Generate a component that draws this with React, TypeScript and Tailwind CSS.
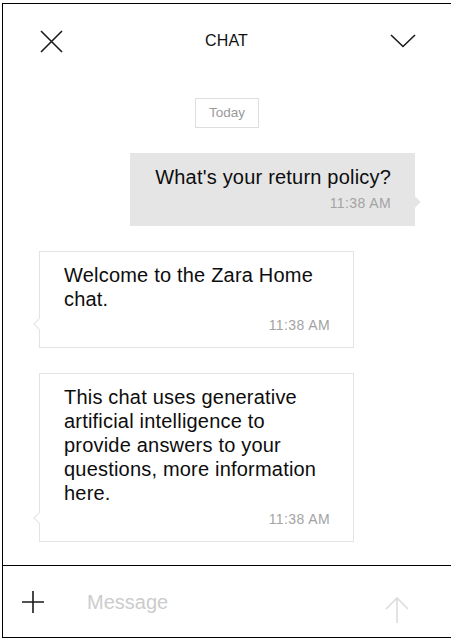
import type { ReactNode } from 'react'

function XIcon() {
  return (
    <svg width="23" height="23" viewBox="0 0 23 23" fill="none" stroke="#1a1a1a" strokeWidth="1.6">
      <path d="M1 1 L22 22 M22 1 L1 22" />
    </svg>
  )
}

function ChevronIcon() {
  return (
    <svg width="26" height="14" viewBox="0 0 26 14" fill="none" stroke="#1a1a1a" strokeWidth="1.6">
      <path d="M1 1 L13 12.5 L25 1" />
    </svg>
  )
}

function PlusIcon() {
  return (
    <svg width="22" height="22" viewBox="0 0 22 22" fill="none" stroke="#1a1a1a" strokeWidth="1.6">
      <path d="M11 0 V22 M0 11 H22" />
    </svg>
  )
}

function ArrowUpIcon() {
  return (
    <svg width="24" height="26" viewBox="0 0 24 26" fill="none" stroke="#dcdcdc" strokeWidth="1.6">
      <path d="M12 1 V26 M1 12 L12 1 L23 12" />
    </svg>
  )
}

function Time({ children }: { children: ReactNode }) {
  return (
    <div className="mt-[6px] text-right text-[14px] leading-4 tracking-[0.4px] text-[#a3a3a3]">{children}</div>
  )
}

function UserBubble({ text, time }: { text: string; time: string }) {
  return (
    <div className="flex justify-end">
      <div className="relative max-w-[315px] bg-[#e5e5e5] pl-[25px] pr-[24px] pt-3 pb-[15px]">
        <div className="text-[20px] leading-6 tracking-[0.2px] text-[#0d0d0d]">{text}</div>
        <Time>{time}</Time>
        <span className="absolute right-[-4px] bottom-[20px] h-[8px] w-[8px] rotate-45 bg-[#e5e5e5]" />
      </div>
    </div>
  )
}

function BotBubble({ text, time }: { text: string; time: string }) {
  return (
    <div className="flex justify-start">
      <div className="relative w-[315px] border border-[#e3e3e3] bg-white pl-[24px] pr-[23px] pt-[11px] pb-[14px]">
        <div className="text-[20px] leading-6 tracking-[0.2px] text-[#0d0d0d]">{text}</div>
        <Time>{time}</Time>
        <span className="absolute left-[-5px] bottom-[19px] h-[8px] w-[8px] rotate-45 border-b border-l border-[#e3e3e3] bg-white" />
      </div>
    </div>
  )
}

export default function App() {
  return (
    <div className="h-[641px] w-[451px] overflow-hidden bg-white font-['Liberation_Sans',Arial,sans-serif]">
      <div className="ml-[2px] mt-[3px] flex h-[635px] w-[449px] flex-col border-t border-l border-b border-black">
        <header className="flex h-[74px] shrink-0 items-center justify-between pl-[37px] pr-[35px]">
          <XIcon />
          <span className="text-[16px] tracking-[0.2px] text-[#111]">CHAT</span>
          <ChevronIcon />
        </header>

        <main className="flex flex-1 flex-col gap-[25px] overflow-hidden px-9 pt-5">
          <div className="flex justify-center">
            <span className="border border-[#dedede] px-[13px] py-[6px] text-[13.5px] leading-4 text-[#9a9a9a]">
              Today
            </span>
          </div>
          <UserBubble text="What's your return policy?" time="11:38 AM" />
          <BotBubble text="Welcome to the Zara Home chat." time="11:38 AM" />
          <BotBubble
            text="This chat uses generative artificial intelligence to provide answers to your questions, more information here."
            time="11:38 AM"
          />
        </main>

        <footer className="flex h-[72px] shrink-0 items-center border-t border-black pl-[19px] pr-[42px]">
          <PlusIcon />
          <span className="ml-[43px] flex-1 text-[20px] text-[#cccccc]">Message</span>
          <div className="mt-4">
            <ArrowUpIcon />
          </div>
        </footer>
      </div>
    </div>
  )
}
